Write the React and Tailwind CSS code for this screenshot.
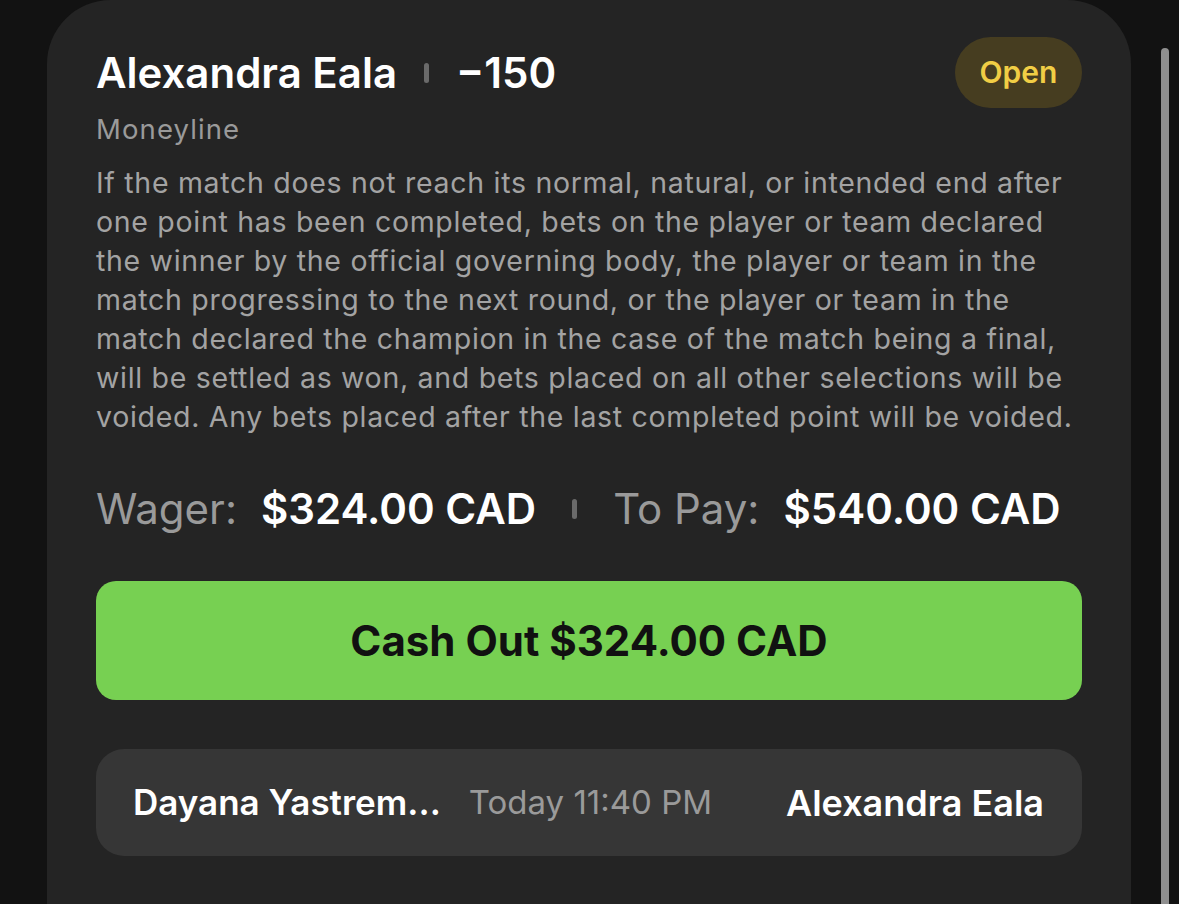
const LINES = [
  'If the match does not reach its normal, natural, or intended end after',
  'one point has been completed, bets on the player or team declared',
  'the winner by the official governing body, the player or team in the',
  'match progressing to the next round, or the player or team in the',
  'match declared the champion in the case of the match being a final,',
  'will be settled as won, and bets placed on all other selections will be',
  'voided. Any bets placed after the last completed point will be voided.',
];

function Divider() {
  return <span className="inline-block w-[5px] h-[20px] rounded-full bg-[#6a6a6a]" />;
}

export default function App() {
  return (
    <div className="h-[904px] w-full overflow-hidden bg-[#121212] flex font-['Inter',sans-serif]">
      <div className="ml-[47px] w-[1084px] h-full bg-[#242424] rounded-t-[64px] px-[49px] pt-[37px]">
        {/* entête */}
        <div className="flex items-start justify-between">
          <div className="flex items-center gap-[27px] h-[71px]">
            <span className="text-[42px] font-semibold text-white">Alexandra Eala</span>
            <Divider />
            <span className="text-[42px] font-semibold text-white">−150</span>
          </div>
          <span className="h-[71px] w-[127px] rounded-full bg-[#463d20] text-[#f1ce45] text-[30px] font-semibold flex items-center justify-center">
            Open
          </span>
        </div>
        <p className="mt-[2px] text-[27.5px] leading-[39px] tracking-[1.1px] text-[#9a9a9a]">Moneyline</p>
        <p className="mt-[14px] text-[28.5px] leading-[39px] tracking-[0.7px] text-[#a3a3a3] whitespace-nowrap">
          {LINES.map((l) => (
            <span key={l} className="block">{l}</span>
          ))}
        </p>

        {/* mise */}
        <div className="mt-[49px] flex items-center text-[42px] leading-[48px]">
          <span className="text-[#9a9a9a]">Wager:</span>
          <span className="ml-[24px] font-semibold text-white">$324.00 CAD</span>
          <span className="ml-[36px] mr-[36px] flex"><Divider /></span>
          <span className="text-[#9a9a9a]">To Pay:</span>
          <span className="ml-[24px] font-semibold text-white">$540.00 CAD</span>
        </div>

        <button className="mt-[48px] w-full h-[119px] rounded-[20px] bg-[#77d052] text-[#111] text-[42px] font-bold">
          Cash Out $324.00 CAD
        </button>

        <div className="mt-[49px] h-[107px] rounded-[28px] bg-[#363636] flex items-center pl-[37px] pr-[38px]">
          <span className="text-[35px] font-semibold text-white">Dayana Yastrem...</span>
          <span className="ml-[28px] text-[33px] text-[#9a9a9a]">Today 11:40 PM</span>
          <span className="ml-auto text-[36px] font-semibold text-white">Alexandra Eala</span>
        </div>
      </div>
      <div className="ml-[30px] mt-[48px] w-[8px] h-full rounded-t-full bg-[#8f8f8f]" />
    </div>
  );
}
